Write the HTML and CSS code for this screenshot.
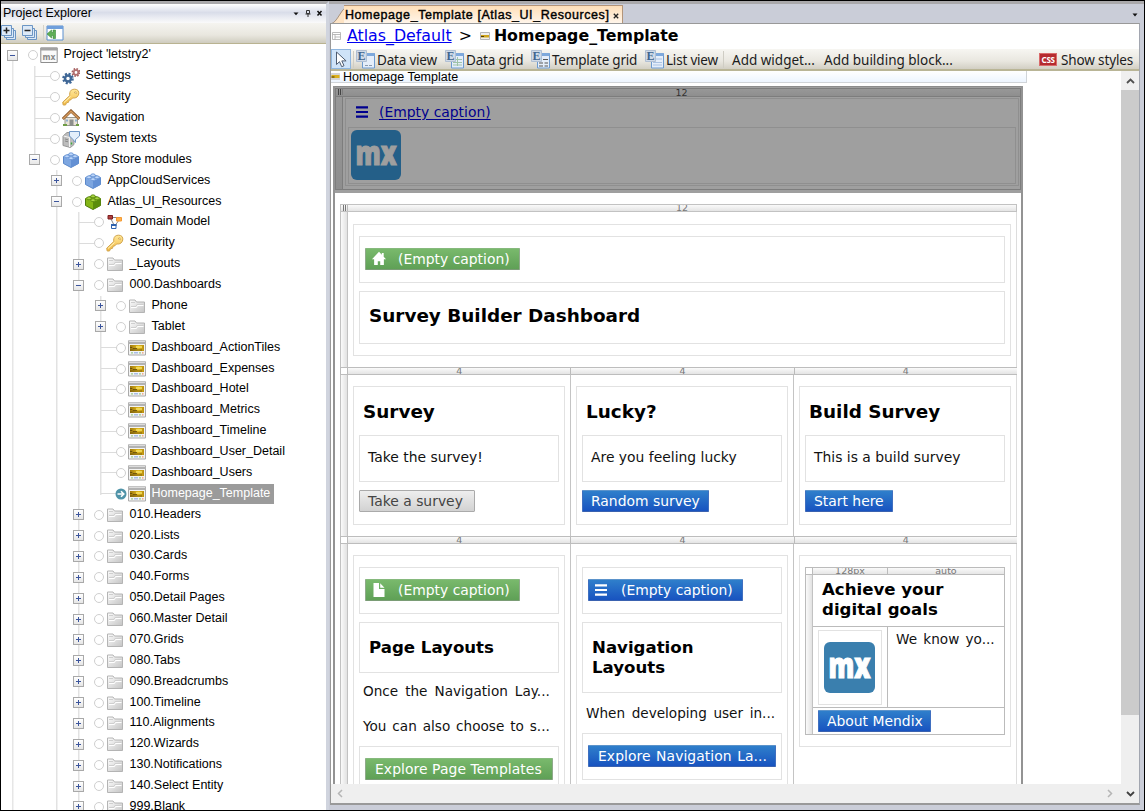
FILE: index.html
```html
<!DOCTYPE html>
<html lang="en">
<head>
<meta charset="utf-8">
<title>Project Explorer</title>
<link rel="stylesheet" href="styles.css">
</head>
<body>
<svg class="defs" width="0" height="0">
  <defs>
    <linearGradient id="gFolder" x1="0" y1="0" x2="1" y2="1"><stop offset="0" stop-color="#fdfdfd"/><stop offset="1" stop-color="#c4c4c4"/></linearGradient>
    <linearGradient id="gKey" x1="0" y1="0" x2="0" y2="1"><stop offset="0" stop-color="#ffe89a"/><stop offset="1" stop-color="#f3b942"/></linearGradient>
    <linearGradient id="gGold" x1="0" y1="0" x2="1" y2="0"><stop offset="0" stop-color="#a07a0c"/><stop offset=".6" stop-color="#e0b81c"/><stop offset="1" stop-color="#b98f10"/></linearGradient>
  </defs>
  <symbol id="folder" viewBox="0 0 18 18"><path d="M1.500 15.500V3h5.500l1.500 2h8v10.500z" fill="url(#gFolder)" stroke="#b4b4b4"/><path d="M3 5.500h4M3 9.500h5l1-2h6.500" stroke="#cfcfcf" fill="none"/><path d="M3 10.500h5.500l1-2h6" stroke="#fff" fill="none"/></symbol>
  <symbol id="page" viewBox="0 0 18 18"><path d="M.5 2h17v14H.5z" fill="#f3f3f3" stroke="#aaa"/><path d="M0 1.500h18v3.500H0z" fill="#b2b2b2"/><path d="M1 2.500h16" stroke="#dcdcdc"/><path d="M2 6h14v6H2z" fill="url(#gGold)"/><path d="M8 8h6" stroke="#f7e46a" stroke-width="1.500" fill="none"/><path d="M2 8.500h2l1 1h4M2 11h12" stroke="#5f480a" stroke-width=".8" fill="none"/><path d="M3 13.800h2M11 13.800h2" stroke="#9ccc8a" stroke-width="1.300"/><path d="M6 13.800h4" stroke="#9cb5e4" stroke-width="1.300"/><path d="M14 13.800h1.500" stroke="#ef9a72" stroke-width="1.300"/></symbol>
  <symbol id="key" viewBox="0 0 18 18"><path d="M9.200 2.200C11 .8 14.500.8 16 2.500c1.500 2 .8 5-1 6.500-1.300 1-3 1.200-4.300.9L9 11.700l-2 .6-.5 2-2 .5L3.500 17H1.200l-.5-2.800L7.800 7.500C7.500 5.800 7.700 3.500 9.200 2.200z" fill="url(#gKey)" stroke="#d2a650"/><path d="M12 4.500l2-.8.5 2z" fill="#fff" stroke="#c99a3c" stroke-width=".6"/><path d="M2 14.500l6.500-6" stroke="#fff3bf"/></symbol>
  <symbol id="gears" viewBox="0 0 18 18"><circle cx="6" cy="11.500" r="4.500" fill="none" stroke="#3f6796" stroke-width="2.600" stroke-dasharray="2 1.530"/><circle cx="6" cy="11.500" r="3" fill="none" stroke="#3f6796" stroke-width="2.500"/><circle cx="14" cy="5.500" r="3.500" fill="none" stroke="#a45e5e" stroke-width="2" stroke-dasharray="1.500 1.250"/><circle cx="14" cy="5.500" r="2.300" fill="none" stroke="#b27070" stroke-width="1.800"/></symbol>
  <symbol id="house" viewBox="0 0 18 18"><path d="M3 8.500h12.500v8H3z" fill="#e9e3d8" stroke="#9a9a92"/><path d="M7.500 10.500h4v6.500h-4z" fill="#8d8f8c"/><path d="M4 10.500h2v2H4zM13 10.500h2v2h-2z" fill="#8fb0cf"/><path d="M.8 10L9 2l8.400 8" fill="none" stroke="#8b5a2e" stroke-width="3"/><path d="M1.200 9.700L9 2.200l8 7.500" fill="none" stroke="#d59a5c" stroke-width="1.400"/><path d="M1 16h4M14 16h3" stroke="#6e9d45" stroke-width="2"/></symbol>
  <symbol id="texts" viewBox="0 0 18 18"><path d="M1 6l4-3.500h7v12L8.500 17.500 1 15.500z" fill="#bdbdbd" stroke="#969696"/><path d="M1.500 6l6 1.500v9.500" fill="none" stroke="#f4f4f4"/><path d="M3 9l3 .8M3 11l3 .8" stroke="#888"/><path d="M7.500 1.500h10v4.500l-4 3.500v3l-2.500-3-3.500-3.500z" fill="#e4effb" stroke="#6f96c6"/><path d="M9.500 12.500v2" stroke="#3cab3c" stroke-width="1.500"/></symbol>
  <symbol id="brickBlue" viewBox="0 0 18 18"><path d="M1.500 5.500L9 2.500l7.500 3v7L9 16.500l-7.500-4z" fill="#7da6e0" stroke="#5b88ca"/><path d="M9 9v7.500l7.500-4v-7z" fill="#6390d4"/><path d="M1.500 5.500L9 9l7.500-3.500L9 2.500z" fill="#a9c8f3"/><g fill="#bdd6fa" stroke="#5f8dcf" stroke-width=".8"><ellipse cx="9" cy="3.300" rx="2.300" ry="1.500"/><ellipse cx="5" cy="5.300" rx="2.300" ry="1.500"/><ellipse cx="13" cy="5.300" rx="2.300" ry="1.500"/><ellipse cx="9" cy="7.200" rx="2.300" ry="1.500"/></g></symbol>
  <symbol id="brickGreen" viewBox="0 0 18 18"><path d="M1.500 5.500L9 2.500l7.500 3v7L9 16.500l-7.500-4z" fill="#84b516" stroke="#4f7b0c"/><path d="M9 9v7.500l7.500-4v-7z" fill="#5c8d0c"/><path d="M1.500 5.500L9 9l7.500-3.500L9 2.500z" fill="#9aca2a"/><g fill="#a8d440" stroke="#527f0e" stroke-width=".8"><ellipse cx="9" cy="3.300" rx="2.300" ry="1.500"/><ellipse cx="5" cy="5.300" rx="2.300" ry="1.500"/><ellipse cx="13" cy="5.300" rx="2.300" ry="1.500"/><ellipse cx="9" cy="7.200" rx="2.300" ry="1.500"/></g></symbol>
  <symbol id="domain" viewBox="0 0 18 18"><path d="M5 6l3 6M13 7l-3.500 5M6 4.500h5" stroke="#888" fill="none"/><path d="M2 2.500h4.500v3.500H2z" fill="#b04040" stroke="#7c1f1f"/><path d="M10.500 4.500h5v3.500h-5z" fill="#ffb24d" stroke="#f39a35"/><path d="M5.500 11.500h4.500v4h-4.500z" fill="#fff" stroke="#2f63ae"/><path d="M5 11h5.500v2H5z" fill="#2f63ae"/></symbol>
  <symbol id="mxwin" viewBox="0 0 18 18"><path d="M.8 2h16.400v14.500H.8z" fill="#fafafa" stroke="#8e8e8e"/><path d="M.5 1.500h17v3H.5z" fill="#a2a2a2"/><text x="2.500" y="13.500" textLength="13" lengthAdjust="spacingAndGlyphs" font-family="DejaVu Sans" font-weight="bold" font-size="9" fill="#8a8a8a">mx</text></symbol>
  <symbol id="bars" viewBox="0 0 12 12"><path d="M0 1.300h12M0 6h12M0 10.700h12" stroke="currentColor" stroke-width="2.200"/></symbol>
  <symbol id="home" viewBox="0 0 16 16"><path d="M8 .8L.5 8.800h2.300V15h3.900v-4h2.600v4h3.900V8.800h2.300L13 6V2h-2v2z" fill="currentColor"/></symbol>
  <symbol id="file" viewBox="0 0 12 14"><path d="M.5 0H6v6h5.500v8H.5zM7.200.3v4.500h4.300z" fill="currentColor"/></symbol>
  <symbol id="stack" viewBox="0 0 16 16"><g fill="#dce9f7" stroke="#6b95c4"><path d="M5.500 5.500h9v9h-9z"/><path d="M3.500 3.500h9v9h-9z"/><path d="M.5.500h10v10H.5z"/></g></symbol>
  <symbol id="widget" viewBox="0 0 19 19"><path d="M6.500 3.500h12v14.500h-12z" fill="#e5eefa" stroke="#6d9bd0"/><path d="M6.500 3h12v3h-12z" fill="#7ea9dc"/><path d="M.5.500h10v11H.5z" fill="#cfdae8" stroke="#b0bfd3"/><text x="1.500" y="10" font-family="Liberation Serif" font-weight="bold" font-size="12" fill="#41658f">E</text></symbol>
  <symbol id="mxlogo" viewBox="0 0 51 51"><rect width="51" height="51" rx="6" fill="var(--logo)"/><text x="4.500" y="35.500" textLength="42" lengthAdjust="spacingAndGlyphs" font-family="Open Sans" font-weight="800" font-size="35" fill="var(--logo-ink)" stroke="var(--logo-ink)" stroke-width="1.200">mx</text></symbol>
</svg>

<div class="window">
  <aside class="explorer">
    <header class="explorer-title"><span>Project Explorer</span>
      <svg width="30" height="9" viewBox="0 0 30 9"><path d="M.5 3.500h5L3 6.200z" fill="#111"/><path d="M13.500 1.500h3v3h-3zM12.500 5h5M15 5v3" stroke="#333" fill="none"/><path d="M24.500 2l4 4.500M28.500 2l-4 4.500" stroke="#111" stroke-width="1.500"/></svg>
    </header>
    <div class="explorer-tools">
      <svg width="16" height="16"><use href="#stack"/><path d="M5.500 2.500v6M2.500 5.500h6" stroke="#222" stroke-width="1.500"/></svg>
      <svg width="16" height="16"><use href="#stack"/><path d="M2.500 5.500h6" stroke="#222" stroke-width="1.500"/></svg>
      <i class="sep"></i>
      <svg width="18" height="16" viewBox="0 0 18 16"><path d="M1 1h16v14H1z" fill="#fff" stroke="#5b8fd0"/><path d="M1 1h16v3H1z" fill="#6f9fdc"/><path d="M1 9l4.500-4v2.500H7V5h2.500v8.500H7v-3H5.500V13z" fill="#5fae57" stroke="#3a8a3a" stroke-width=".6"/></svg>
    </div>
    <ul class="tree">
      <li><div class="row"><i class="box"></i><i class="dot"></i><svg class="ico"><use href="#mxwin"/></svg><span>Project 'letstry2'</span></div>
        <ul class="guide-modules">
          <li><div class="row"><i class="stem"></i><i class="dot"></i><svg class="ico"><use href="#gears"/></svg><span>Settings</span></div></li>
          <li><div class="row"><i class="stem"></i><i class="dot"></i><svg class="ico"><use href="#key"/></svg><span>Security</span></div></li>
          <li><div class="row"><i class="stem"></i><i class="dot"></i><svg class="ico"><use href="#house"/></svg><span>Navigation</span></div></li>
          <li><div class="row"><i class="stem"></i><i class="dot"></i><svg class="ico"><use href="#texts"/></svg><span>System texts</span></div></li>
          <li><div class="row"><i class="box"></i><i class="dot"></i><svg class="ico"><use href="#brickBlue"/></svg><span>App Store modules</span></div>
            <ul class="guide-full">
              <li><div class="row"><i class="box plus"></i><i class="dot"></i><svg class="ico"><use href="#brickBlue"/></svg><span>AppCloudServices</span></div></li>
              <li><div class="row"><i class="box"></i><i class="dot"></i><svg class="ico"><use href="#brickGreen"/></svg><span>Atlas_UI_Resources</span></div>
                <ul class="guide-full">
                  <li><div class="row"><i class="stem"></i><i class="dot"></i><svg class="ico"><use href="#domain"/></svg><span>Domain Model</span></div></li>
                  <li><div class="row"><i class="stem"></i><i class="dot"></i><svg class="ico"><use href="#key"/></svg><span>Security</span></div></li>
                  <li><div class="row"><i class="box plus"></i><i class="dot"></i><svg class="ico"><use href="#folder"/></svg><span>_Layouts</span></div></li>
                  <li><div class="row"><i class="box"></i><i class="dot"></i><svg class="ico"><use href="#folder"/></svg><span>000.Dashboards</span></div>
                    <ul class="guide-last">
                      <li><div class="row"><i class="box plus"></i><i class="dot"></i><svg class="ico"><use href="#folder"/></svg><span>Phone</span></div></li>
                      <li><div class="row"><i class="box plus"></i><i class="dot"></i><svg class="ico"><use href="#folder"/></svg><span>Tablet</span></div></li>
                      <li><div class="row"><i class="stem"></i><i class="dot"></i><svg class="ico"><use href="#page"/></svg><span>Dashboard_ActionTiles</span></div></li>
                      <li><div class="row"><i class="stem"></i><i class="dot"></i><svg class="ico"><use href="#page"/></svg><span>Dashboard_Expenses</span></div></li>
                      <li><div class="row"><i class="stem"></i><i class="dot"></i><svg class="ico"><use href="#page"/></svg><span>Dashboard_Hotel</span></div></li>
                      <li><div class="row"><i class="stem"></i><i class="dot"></i><svg class="ico"><use href="#page"/></svg><span>Dashboard_Metrics</span></div></li>
                      <li><div class="row"><i class="stem"></i><i class="dot"></i><svg class="ico"><use href="#page"/></svg><span>Dashboard_Timeline</span></div></li>
                      <li><div class="row"><i class="stem"></i><i class="dot"></i><svg class="ico"><use href="#page"/></svg><span>Dashboard_User_Detail</span></div></li>
                      <li><div class="row"><i class="stem"></i><i class="dot"></i><svg class="ico"><use href="#page"/></svg><span>Dashboard_Users</span></div></li>
                      <li><div class="row selected"><i class="stem"></i><svg class="go" width="12" height="12"><circle cx="6" cy="6" r="5.500" fill="#4f93a8"/><path d="M2.500 6h5M6 3.200L8.800 6 6 8.800" stroke="#fff" stroke-width="1.600" fill="none"/></svg><svg class="ico"><use href="#page"/></svg><span>Homepage_Template</span></div></li>
                    </ul>
                  </li>
                  <li><div class="row"><i class="box plus"></i><i class="dot"></i><svg class="ico"><use href="#folder"/></svg><span>010.Headers</span></div></li>
                  <li><div class="row"><i class="box plus"></i><i class="dot"></i><svg class="ico"><use href="#folder"/></svg><span>020.Lists</span></div></li>
                  <li><div class="row"><i class="box plus"></i><i class="dot"></i><svg class="ico"><use href="#folder"/></svg><span>030.Cards</span></div></li>
                  <li><div class="row"><i class="box plus"></i><i class="dot"></i><svg class="ico"><use href="#folder"/></svg><span>040.Forms</span></div></li>
                  <li><div class="row"><i class="box plus"></i><i class="dot"></i><svg class="ico"><use href="#folder"/></svg><span>050.Detail Pages</span></div></li>
                  <li><div class="row"><i class="box plus"></i><i class="dot"></i><svg class="ico"><use href="#folder"/></svg><span>060.Master Detail</span></div></li>
                  <li><div class="row"><i class="box plus"></i><i class="dot"></i><svg class="ico"><use href="#folder"/></svg><span>070.Grids</span></div></li>
                  <li><div class="row"><i class="box plus"></i><i class="dot"></i><svg class="ico"><use href="#folder"/></svg><span>080.Tabs</span></div></li>
                  <li><div class="row"><i class="box plus"></i><i class="dot"></i><svg class="ico"><use href="#folder"/></svg><span>090.Breadcrumbs</span></div></li>
                  <li><div class="row"><i class="box plus"></i><i class="dot"></i><svg class="ico"><use href="#folder"/></svg><span>100.Timeline</span></div></li>
                  <li><div class="row"><i class="box plus"></i><i class="dot"></i><svg class="ico"><use href="#folder"/></svg><span>110.Alignments</span></div></li>
                  <li><div class="row"><i class="box plus"></i><i class="dot"></i><svg class="ico"><use href="#folder"/></svg><span>120.Wizards</span></div></li>
                  <li><div class="row"><i class="box plus"></i><i class="dot"></i><svg class="ico"><use href="#folder"/></svg><span>130.Notifications</span></div></li>
                  <li><div class="row"><i class="box plus"></i><i class="dot"></i><svg class="ico"><use href="#folder"/></svg><span>140.Select Entity</span></div></li>
                  <li><div class="row"><i class="box plus"></i><i class="dot"></i><svg class="ico"><use href="#folder"/></svg><span>999.Blank</span></div></li>
                </ul>
              </li>
            </ul>
          </li>
        </ul>
      </li>
    </ul>
  </aside>

  <main class="editor">
    <div class="tabs">
      <svg class="tab-slope" width="20" height="19" viewBox="0 0 20 19"><path d="M1 19.500C9 17 11 1.500 20 .5V19.500z" fill="#fde3c4"/><path d="M1 19C9 16 11 1.500 20 .5" fill="none" stroke="#a9937c"/></svg>
      <div class="tab"><span>Homepage_Template [Atlas_UI_Resources]</span><svg width="6" height="6" viewBox="0 0 6 6"><path d="M.8.800l4.400 4.400M5.200.800L.8 5.200" stroke="#222" stroke-width="1.300"/></svg></div>
      <svg class="tab-menu" width="6" height="4"><path d="M.5.500h5L3 3.500z" fill="#111"/></svg>
    </div>
    <div class="frame">
      <div class="crumbs">
        <svg width="9" height="8" viewBox="0 0 9 8"><path d="M.5.500h8v7h-8zM.5 2.500h8M3 2.500v5M3 5h5.500" fill="#fff" stroke="#aaa" stroke-width=".8"/></svg>
        <a>Atlas_Default</a><span class="gt">&gt;</span>
        <svg class="mini" width="10" height="8" viewBox="0 0 10 8"><path d="M.5.500h9v7h-9z" fill="#eee" stroke="#b5b5b5"/><path d="M1 3h8v2.500H1z" fill="#cfa51c"/><path d="M1 4.500h3" stroke="#4f3b08"/></svg>
        <b>Homepage_Template</b>
      </div>
      <div class="toolbar">
        <i class="pointer"><svg width="13" height="17" viewBox="0 0 13 17"><path d="M1.500 1v12.500l3-2.800 2.200 5 2.300-1-2.200-4.800h4.300z" fill="#fff" stroke="#4d5b70"/></svg></i><i class="sep"></i>
        <svg class="wi" width="19" height="19"><use href="#widget"/><path d="M9 15.500h3M13 15.500h3" stroke="#8a99ad"/></svg><span class="t1">Data view</span>
        <svg class="wi" width="19" height="19"><use href="#widget"/><path d="M11 9.500h6M8 12.500h9M8 15h9M12.500 7v9" stroke="#9fc3a8"/></svg><span class="t2">Data grid</span>
        <svg class="wi" width="19" height="19"><use href="#widget"/><path d="M8 13h4M13.500 13h3.500M8 16h4M13.500 16h3.500M12 9.500h5" stroke="#555"/></svg><span class="t3">Template grid</span>
        <svg class="wi" width="19" height="19"><use href="#widget"/><path d="M11 9h6M8 12.500h9M8 15h9" stroke="#aac2e2"/></svg><span class="t4">List view</span>
        <i class="sep"></i><span class="t5">Add widget...</span><span class="t6">Add building block...</span>
        <span class="css">CSS</span><span class="t7">Show styles</span>
      </div>
      <div class="work">
        <div class="viewport">
          <div class="page-name"><svg width="9" height="7" viewBox="0 0 9 7"><path d="M0 0h9v7H0z" fill="#d5d5d5"/><path d="M.5 2h8v3h-8z" fill="#dcb01d"/><path d="M.5 4h3" stroke="#4f3b08"/></svg><span>Homepage Template</span></div>
          <div class="template">
            <section class="banner">
              <div class="ruler dark"><i class="grip"></i><span>12</span></div>
              <div class="banner-body">
                <i class="handle dark"></i>
                <div class="banner-box">
                  <a class="menu-link"><svg width="12" height="12"><use href="#bars"/></svg><u>(Empty caption)</u></a>
                  <div class="banner-logo"><svg class="logo dim" width="50" height="50"><use href="#mxlogo"/></svg></div>
                </div>
              </div>
            </section>
            <section class="layout">
              <div class="ruler"><i class="grip"></i><span>12</span></div>
              <div class="layout-row first">
                <i class="handle"></i>
                <div class="col"><div class="container">
                  <div class="cell tall"><button class="btn green icon"><svg width="16" height="15"><use href="#home"/></svg>(Empty caption)</button></div>
                  <div class="cell title"><h1>Survey Builder Dashboard</h1></div>
                </div></div>
              </div>
              <div class="ruler thirds"><i class="blank"></i><span>4</span><span>4</span><span>4</span></div>
              <div class="layout-row second">
                <i class="handle"></i>
                <div class="col"><div class="container card"><h2>Survey</h2><div class="cell text">Take the survey!</div><button class="btn gray w1">Take a survey</button></div></div>
                <div class="col"><div class="container card"><h2>Lucky?</h2><div class="cell text">Are you feeling lucky</div><button class="btn blue w2">Random survey</button></div></div>
                <div class="col"><div class="container card"><h2>Build Survey</h2><div class="cell text">This is a build survey</div><button class="btn blue w3">Start here</button></div></div>
              </div>
              <div class="ruler thirds"><i class="blank"></i><span>4</span><span>4</span><span>4</span></div>
              <div class="layout-row third">
                <i class="handle"></i>
                <div class="col"><div class="container">
                  <div class="cell tall"><button class="btn green icon"><svg width="16" height="14"><use href="#file"/></svg>(Empty caption)</button></div>
                  <div class="cell one-line"><h3>Page Layouts</h3></div>
                  <p class="p1">Once the Navigation Lay...</p>
                  <p class="p2">You can also choose to s...</p>
                  <div class="cell tall last"><button class="btn green explore">Explore Page Templates</button></div>
                </div></div>
                <div class="col"><div class="container">
                  <div class="cell tall"><button class="btn blue icon"><svg width="14" height="12"><use href="#bars"/></svg>(Empty caption)</button></div>
                  <div class="cell two-line"><h3>Navigation Layouts</h3></div>
                  <p class="p3">When developing user in...</p>
                  <div class="cell tall last2"><button class="btn blue explore wide">Explore Navigation La...</button></div>
                </div></div>
                <div class="col"><div class="container goals">
                  <div class="table">
                    <i class="corner"></i><span class="th">128px</span><span class="th">auto</span>
                    <i class="handle rows"></i>
                    <h3 class="span2">Achieve your digital goals</h3>
                    <div class="td pic"><div class="pic-box"><svg class="logo" width="51" height="51"><use href="#mxlogo"/></svg></div></div>
                    <div class="td know">We know yo...</div>
                    <div class="span2 foot"><button class="btn blue about">About Mendix</button></div>
                  </div>
                </div></div>
              </div>
            </section>
          </div>
        </div>
        <div class="vscroll"><i class="arrow"><svg width="9" height="6"><path d="M1 5l3.500-3.500L8 5" fill="none" stroke="#505050" stroke-width="1.800"/></svg></i><i class="thumb"></i></div>
        <div class="hscroll"><svg width="6" height="9"><path d="M5 1L1.500 4.500 5 8" fill="none" stroke="#b5b5b5" stroke-width="1.500"/></svg><svg width="6" height="9"><path d="M1 1l3.500 3.500L1 8" fill="none" stroke="#b5b5b5" stroke-width="1.500"/></svg></div>
        <div class="corner-down"><svg width="9" height="6"><path d="M1 1l3.500 3.500L8 1" fill="none" stroke="#404040" stroke-width="1.800"/></svg></div>
      </div>
    </div>
  </main>
</div>
</body>
</html>
```
FILE: styles.css
```css
* { box-sizing: border-box; }
html, body { margin: 0; height: 811px; overflow: hidden; background: #000; }
body { font-family: "Liberation Sans", Arial, sans-serif; font-size: 12.5px; color: #000; }
h1, h2, h3, p, ul { margin: 0; padding: 0; }
ul { list-style: none; }
svg { display: block; flex: none; }
i { display: block; flex: none; font-style: normal; }
.defs { position: absolute; }

.window { display: flex; width: 1145px; height: 811px; border: 1px solid #000; background: #cacdd8; }

/* Project tree */
.explorer { width: 328px; height: 809px; border-top: 3px solid #aaa9ab; border-right: 3px solid #d0d4de; background: #fff; overflow: hidden; display: flex; flex-direction: column; flex: none; }
.explorer-title { display: flex; justify-content: space-between; align-items: center; height: 19px; flex: none; padding: 0 3px 1px 2px; background: linear-gradient(#fff, #d9dde9 45%, #e9ebf2 70%, #fafafa); }
.explorer-tools { display: flex; align-items: center; gap: 5px; height: 21px; flex: none; border-bottom: 1px solid #b9b391; background: linear-gradient(#f5f4f0, #e9e7df 60%, #cfccbf); }
.explorer-tools .sep { width: 1px; height: 17px; background: #d4d2c8; margin-right: -3px; }
.tree { flex: none; margin-top: 1px; background: linear-gradient(#e6e6e6, #e6e6e6) 11px 10px / 1.5px 100% no-repeat; }
.row { display: flex; align-items: center; height: 20.875px; white-space: nowrap; }
ul ul { padding-left: 22px; }
.row span { margin-left: 3.5px; padding: 2px 2px 3px; line-height: 15px; }
.row.selected span { background: #9b9b9b; color: #fff; padding-right: 4px; }
.guide-full { background: linear-gradient(#e2e2e2, #e2e2e2) 33px 0 / 1.5px 100% no-repeat; }
.guide-modules { background: linear-gradient(#e2e2e2, #e2e2e2) 33px 0 / 1.5px 94px no-repeat; }
.guide-last { background: linear-gradient(#e2e2e2, #e2e2e2) 33px 0 / 1.5px 199px no-repeat; }
.box { width: 11px; height: 11px; margin: 0 10px 0 6px; border: 1px solid #a9a9a9; background: linear-gradient(#3c559c, #3c559c) center / 5px 1px no-repeat, linear-gradient(#fff, #e6e6e6); }
.box.plus { background: linear-gradient(#3c559c, #3c559c) center / 5px 1px no-repeat, linear-gradient(#3c559c, #3c559c) center / 1px 5px no-repeat, linear-gradient(#fff, #e6e6e6); }
.stem { width: 15px; height: 1px; margin-left: 12px; background: #dcdcdc; }
.dot { width: 10px; height: 10px; border: 1.5px solid #cfcfcf; border-radius: 50%; background: #fff; }
.go { margin: 0 -1px; }
.ico { width: 18px; height: 18px; margin-left: 2px; }

/* Editor */
.editor { display: flex; flex-direction: column; flex: 1; min-width: 0; border-top: 3px solid #aaa9ab; padding: 0 4px 0 1px; }
.tabs { display: flex; align-items: flex-start; height: 19px; flex: none; padding-right: 1px; }
.tab-slope { margin: 1px -6px 0 0; }
.tab { display: flex; align-items: center; height: 18px; margin-top: 1px; width: 279px; border: 1px solid #b3957a; border-width: 1px 1px 0 0; background: linear-gradient(#ffdfb8, #fff5ea); }
.tab span { flex: none; letter-spacing: .56px; -webkit-text-stroke: .4px #000; margin-left: 1px; }
.tab svg { margin-left: 4px; margin-top: 2px; }
.tab-menu { margin: 9px 1px 0 auto; }
.frame { flex: none; height: 782px; border: 1px solid #999; border-right-color: #a2a6b0; border-bottom: 2px solid #999; background: #fff; display: flex; flex-direction: column; }
.crumbs { display: flex; align-items: center; height: 25px; flex: none; padding: 0 0 2px 1px; font-family: "DejaVu Sans", sans-serif; font-size: 15.8px; }
.crumbs a { color: #0000f0; text-decoration: underline; margin-left: 6px; }
.crumbs .gt { margin: 0 8px 0 7px; }
.crumbs b { margin-left: 4px; }
.toolbar { display: flex; align-items: center; height: 22px; flex: none; padding-right: 6px; border-bottom: 2px solid #b9b596; background: linear-gradient(#f7f6f2, #e9e7e0 60%, #d2cfc4); font-family: "Noto Sans", sans-serif; font-size: 13.5px; color: #1c1c1c; white-space: nowrap; letter-spacing: -.2px; }
.toolbar > span { padding-top: 2px; }
.toolbar .sep { width: 1px; height: 17px; background: #cfcdc4; }
.pointer { width: 20px; height: 20px; border: 1px solid #8fb6df; background: #cfe3f8; padding: 1px 0 0 3px; }
.pointer + .sep { margin: 0 2px; }
.wi { margin-right: 2px; }
.t1, .t2, .t3, .t4 { flex: none; }
.t1 { width: 68px; } .t2 { width: 65px; } .t3 { width: 93px; } .t4 { width: 57px; }
.t5, .t6 { letter-spacing: 0; }
.t5 { width: 92px; margin-left: 8px; }
.toolbar .css { margin-left: auto; width: 18px; height: 13px; padding: 0; border: 1px solid #d96a6a; background: #b52b2f; color: #fff; font: bold 8px/11px "Noto Sans", sans-serif; text-align: center; letter-spacing: -.3px; }
.t7 { margin-left: 4px; letter-spacing: -.15px; }

.work { display: grid; grid-template-columns: 1fr 18px; grid-template-rows: 713px 1fr; flex: 1; min-height: 0; }
.viewport { overflow: hidden; min-width: 0; min-height: 0; }
.page-name { display: flex; align-items: center; gap: 3px; width: 696px; height: 12px; border: 1px solid #d0d4d8; border-width: 0 1px 1px 0; background: linear-gradient(#fff, #edf5ff); line-height: 12px; }
.template { width: 690px; height: 698px; margin: 3px 0 0 2px; border: 2px solid #939393; border-bottom: 0; border-top: 0; overflow: hidden; font-family: "DejaVu Sans", sans-serif; font-size: 13.9px; color: #111; }
.ruler { display: flex; height: 8px; border: 1px solid #c2c2c2; background: linear-gradient(#fafafa, #e4e4e4); font-size: 9.5px; line-height: 6px; color: #777; overflow: hidden; text-align: center; }
.ruler span { flex: 1; }
.grip { width: 7px; height: 6px; border-right: 1px solid #bbb; background: linear-gradient(90deg, transparent 2px, #777 2px 3px, transparent 3px 4px, #777 4px 5px, transparent 5px); }
.handle { width: 8px; border: 1px solid #c2c2c2; border-width: 0 1px; background: linear-gradient(90deg, #fafafa, #e2e2e2); }

.banner { height: 107px; margin: 0 -2px; padding: 1px 0 0 2px; background: #9f9f9f; border-top: 1px solid #8c8c8c; border-right: 2px solid #858585; }
.banner .dark { background: linear-gradient(#989898, #8e8e8e); border-color: #7d7d7d; color: #333; }
.banner .ruler { height: 9px; line-height: 7px; }
.banner .grip { border-color: #7d7d7d; background: linear-gradient(90deg, transparent 2px, #444 2px 3px, transparent 3px 4px, #444 4px 5px, transparent 5px); }
.banner-body { display: flex; height: 93px; border: 1px solid #7d7d7d; border-width: 0 1px 1px 0; }
.banner-box { flex: 1; height: 88px; margin: 1px 1px 0 2px; padding: 0 2px; border: 1px solid #8f8f8f; }
.menu-link { display: flex; align-items: center; height: 28px; padding: 0 0 3px 8px; color: #00008e; gap: 11px; }
.menu-link u { text-underline-offset: 2px; text-decoration-thickness: 1px; }
.banner-logo { height: 57px; padding: 2px; border: 1px solid #8f8f8f; }
.logo { --logo: #3a7fae; --logo-ink: #fff; }
.logo.dim { --logo: #245f88; --logo-ink: #9f9f9f; }

.layout { width: 677px; margin: 11px 0 0 5px; }
.layout-row { display: flex; border-right: 1px solid #ddd; }
.layout-row .col { flex: 1; min-width: 0; padding: 11px 5px 0; }
.layout-row .col + .col { border-left: 1px solid #c4c4c4; }
.first { height: 155px; }
.layout-row.first .col { padding: 12px 5px 0; }
.second { height: 161px; }
.third { height: 300px; }
.thirds { border-color: #bdbdbd; border-width: 1px 0; }
.thirds span + span { border-left: 1px solid #bbb; }
.blank { width: 8px; background: #fff; border: 1px solid #bbb; border-width: 0 1px; }
.container { border: 1px solid #e2e2e2; padding: 11px 5px 0; height: 139px; }
.first .container { height: 132px; }
.third .container { height: 260px; }
.cell { border: 1px solid #e2e2e2; }
.cell.tall { height: 47px; padding: 11px 5px; }
.cell.title { height: 53px; margin-top: 8px; padding: 10px 9px; }
h1, h2 { font-size: 18.4px; line-height: 27px; font-weight: bold; color: #000; }
h3 { font-size: 16.6px; line-height: 20px; font-weight: bold; color: #000; }
.card h2 { margin: 0 4px 10px; }
.cell.text { height: 47px; padding: 12px 8px; line-height: 18px; }
.btn { display: flex; align-items: center; height: 22px; padding: 0 8px 1px; margin: 0; border: 1px solid #aaa; border-radius: 1px; font: 13.9px "DejaVu Sans", sans-serif; white-space: nowrap; }
.card .btn { margin-top: 8px; }
.btn.green { background: linear-gradient(#79b96c, #5fa056); border-color: #86b97d #8fa98b #7a9c75; color: #fff; }
.btn.blue { background: linear-gradient(#2f7fcb, #1853c0); border-color: #5b93cb #3f6fc0 #3a62b0; color: #fff; }
.btn.gray { background: linear-gradient(#eee, #d2d2d2); color: #444; }
.icon { width: 155px; padding-left: 5px; justify-content: flex-start; }
.icon svg { margin-right: 11px; }
.blue.icon svg { margin-right: 13px; }
.w1 { width: 116px; } .w2 { width: 127px; } .w3 { width: 88px; }
.cell.one-line { height: 51px; margin-top: 8px; padding: 15px 9px; }
.cell.two-line { height: 71px; margin-top: 8px; padding: 15px 9px; }
p { line-height: 18px; white-space: nowrap; margin-left: 4px; font-size: 13.6px; word-spacing: 2.7px; }
.p1 { margin-top: 9px; }
.p2 { margin-top: 17px; word-spacing: 1.6px; }
.last { margin-top: 11px; }
.p3 { margin-top: 11px; word-spacing: 2.3px; }
.last2 { margin-top: 11px; }
.explore { width: 188px; padding-left: 9px; letter-spacing: .07px; }
.explore.wide { word-spacing: 1px; }
.third .goals { height: 192px; }
.table { display: grid; grid-template-columns: 7px 74px 1fr; grid-template-rows: 7px 52px 81px 26px; height: 168px; border: 1px solid #bbb; }
.corner { border-right: 1px solid #bbb; border-bottom: 1px solid #bbb; }
.th { font-size: 9.5px; line-height: 6px; text-align: center; color: #777; border: 1px solid #bbb; border-width: 0 0 1px; background: linear-gradient(#fafafa, #e6e6e6); overflow: hidden; }
.th + .th { border-left-width: 1px; }
.handle.rows { grid-row: 2 / 5; grid-column: 1; width: 7px; border-left: 0; }
.span2 { grid-column: 2 / 4; border-bottom: 1px solid #bbb; padding: 5px 9px 0; }
h3.span2 { width: 100%; padding-right: 40px; }
.pic { border-bottom: 1px solid #bbb; padding: 3px 5px; }
.pic-box { width: 64px; height: 75px; border: 1px solid #e2e2e2; padding: 11px 5px; }
.know { border-left: 1px solid #bbb; border-bottom: 1px solid #bbb; padding: 3px 8px; line-height: 18px; word-spacing: 2px; white-space: nowrap; font-size: 13.6px; }
.span2.foot { padding: 2px 5px; border: 0; }
.about { width: 113px; }

/* Scroll bars */
.vscroll { background: #efefef; }
.vscroll .arrow { height: 19px; display: flex; align-items: center; justify-content: center; }
.thumb { height: 625px; background: #cbcbcb; }
.hscroll { display: flex; justify-content: space-between; align-items: center; padding: 0 8px 0 6px; background: #efefef; }
.corner-down { display: flex; align-items: center; justify-content: center; background: #efefef; }
```
